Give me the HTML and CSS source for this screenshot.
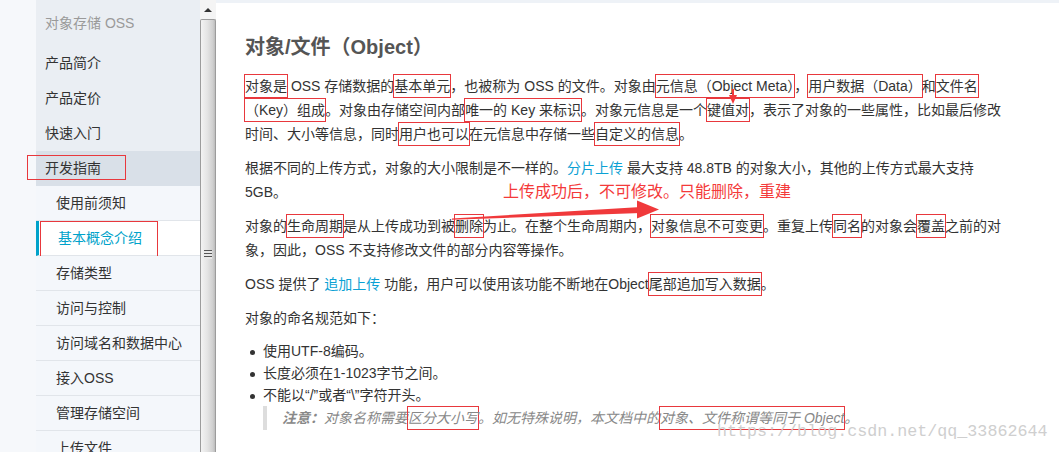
FILE: index.html
```html
<!DOCTYPE html>
<html>
<head>
    <meta charset="utf-8">
    <title>对象/文件（Object）</title>
    <link rel="stylesheet" href="styles.css">
</head>
<body>
    <div class="page">
        <div class="gutter"></div>

        <ul class="side-nav">
            <li class="nav-head">对象存储 OSS</li>
            <li class="nav-item">产品简介</li>
            <li class="nav-item">产品定价</li>
            <li class="nav-item">快速入门</li>
            <li class="nav-item open">开发指南</li>
            <li class="nav-sub">使用前须知</li>
            <li class="nav-sub active">基本概念介绍</li>
            <li class="nav-sub">存储类型</li>
            <li class="nav-sub">访问与控制</li>
            <li class="nav-sub">访问域名和数据中心</li>
            <li class="nav-sub">接入OSS</li>
            <li class="nav-sub">管理存储空间</li>
            <li class="nav-sub">上传文件</li>
        </ul>

        <div class="scrollbar">
            <div class="scroll-btn"></div>
            <div class="scroll-thumb"><span class="grip"></span></div>
        </div>

        <div class="main">
            <h1>对象/文件（Object）</h1>

            <p><span class="hl">对象是</span> OSS 存储数据的<span class="hl">基本单元</span>，也被称为 OSS 的文件。对象由<span class="hl">元信息（Object Meta）</span>，<span class="hl">用户数据（Data）</span>和<span class="hl">文件名</span> <span class="hl">（Key）组成</span>。对象由存储空间内部<span class="hl">唯一的 Key 来标识</span>。对象元信息是一个<span class="hl">键值对</span>，表示了对象的一些属性，比如最后修改时间、大小等信息，同时<span class="hl">用户也可以</span>在元信息中存储一些<span class="hl">自定义的信息</span>。</p>

            <p>根据不同的上传方式，对象的大小限制是不一样的。<a class="link" href="#">分片上传</a> 最大支持 48.8TB 的对象大小，其他的上传方式最大支持 5GB。</p>

            <p>对象的<span class="hl">生命周期</span>是从上传成功到被<span class="hl">删除</span>为止。在整个生命周期内，<span class="hl">对象信息不可变更</span>。重复上传<span class="hl">同名</span>的对象会<span class="hl">覆盖</span>之前的对象，因此，OSS 不支持修改文件的部分内容等操作。</p>

            <p>OSS 提供了 <a class="link" href="#">追加上传</a> 功能，用户可以使用该功能不断地在Object<span class="hl">尾部追加写入数据</span>。</p>

            <p>对象的命名规范如下：</p>

            <ul class="rules">
                <li>使用UTF-8编码。</li>
                <li>长度必须在1-1023字节之间。</li>
                <li>不能以“/”或者“\”字符开头。</li>
            </ul>

            <div class="note"><b>注意：</b>对象名称需要<span class="hl">区分大小写</span>。如无特殊说明，本文档中的<span class="hl">对象、文件称谓等同于 Object</span>。</div>

            <!-- annotations drawn over the page -->
            <div class="annot">上传成功后，不可修改。只能删除，重建</div>
            <svg class="marks" width="843" height="452" viewBox="0 0 843 452">
                <polygon points="236,218.5 425,207 425,213 236,219.8" fill="#f0393b"/>
                <polygon points="421,200.5 443,209.5 421,218.5" fill="#f0393b"/>
                <line x1="517" y1="89" x2="517" y2="97" stroke="#f0393b" stroke-width="2"/>
                <polygon points="513,95 521,95 517,104" fill="#f0393b"/>
            </svg>
            <div class="watermark">https://blog.csdn.net/qq_33862644</div>
        </div>
    </div>
</body>
</html>
```

FILE: styles.css
```css
body {
    margin: 0;
    font-family: "Liberation Sans", "Noto Sans CJK SC", sans-serif;
    font-size: 14px;
    color: #333;
    background: #fff;
}

.page {
    display: flex;
    height: 452px;
    overflow: hidden;
}

.gutter {
    width: 36px;
    flex: none;
    background: #f6f8fb;
}

/* side navigation */
.side-nav {
    width: 164px;
    flex: none;
    margin: 0;
    padding: 0;
    list-style: none;
    background: #eaeef3;
}

.nav-head {
    height: 46px;
    line-height: 46px;
    padding-left: 9px;
    color: #9a9a9a;
}

.nav-item {
    height: 35px;
    line-height: 35px;
    padding-left: 9px;
    position: relative;
}

.nav-item.open {
    background: #d9e0e8;
}

.nav-item.open::after {
    content: "";
    position: absolute;
    left: -9px;
    top: 4px;
    width: 99px;
    height: 25px;
    border: 1px solid #e8383d;
    box-sizing: border-box;
}

.nav-sub {
    height: 34px;
    line-height: 34px;
    padding-left: 20px;
    background: #f4f7fb;
    border-bottom: 1px solid #e1e5ea;
    position: relative;
    white-space: nowrap;
}

.nav-sub.active {
    background: #fff;
    color: #00a2ca;
    border-left: 3px solid #00a2ca;
    padding-left: 19px;
}

.nav-sub.active::after {
    content: "";
    position: absolute;
    left: 1px;
    top: 0;
    width: 118px;
    height: 38px;
    border: 1px solid #e8383d;
    box-sizing: border-box;
}

/* fake scrollbar */
.scrollbar {
    width: 16px;
    flex: none;
    display: flex;
    flex-direction: column;
    background: #f0f0f0;
}

.scroll-btn {
    height: 19px;
    flex: none;
    background: #f4f4f4;
    display: flex;
    align-items: center;
    justify-content: center;
}

.scroll-btn::before {
    content: "";
    border-left: 4px solid transparent;
    border-right: 4px solid transparent;
    border-bottom: 4px solid #333;
}

.scroll-thumb {
    flex: 1;
    border: 1px solid #9c9c9c;
    border-bottom: none;
    border-radius: 2px 2px 0 0;
    background: linear-gradient(to right, #f3f3f3, #e4e4e4 45%, #cfcfcf 85%, #bcbcbc);
    display: flex;
    justify-content: center;
    padding-top: 230px;
}

.grip {
    width: 8px;
    height: 9px;
    background: repeating-linear-gradient(#555 0, #555 1px, #e8e8e8 1px, #e8e8e8 3px);
}

/* article */
.main {
    flex: 1;
    position: relative;
    padding: 33px 56px 0 29px;
    box-shadow: inset 0 3px 0 #eef2f7;
}

h1 {
    margin: 0 0 13px;
    font-size: 20px;
    line-height: 28px;
    color: #555;
}

p {
    margin: 0 0 10px;
    line-height: 24px;
}

.hl {
    border: 1px solid #e8383d;
    padding: 3px 0;
    margin: 0 -1px;
}

.link {
    color: #0ba1d4;
    text-decoration: none;
}

.rules {
    list-style: none;
    margin: 0;
    padding: 0;
    line-height: 22px;
}

.rules li::before {
    content: "";
    display: inline-block;
    width: 5px;
    height: 5px;
    border-radius: 50%;
    background: #333;
    margin: 0 8px 0 5px;
    vertical-align: middle;
}

.note {
    margin-left: 18px;
    border-left: 4px solid #ddd;
    padding-left: 15px;
    line-height: 24px;
    color: #888;
    font-style: italic;
}

.annot {
    position: absolute;
    left: 287px;
    top: 179px;
    font-family: "Noto Sans CJK SC", sans-serif;
    font-size: 16px;
    line-height: 22px;
    color: #f43a3a;
}

.marks {
    position: absolute;
    left: 0;
    top: 0;
    pointer-events: none;
}

.watermark {
    position: absolute;
    left: 501px;
    top: 422px;
    font-family: "Liberation Mono", monospace;
    font-size: 16.7px;
    line-height: 20px;
    color: #cfcfcf;
}
```
